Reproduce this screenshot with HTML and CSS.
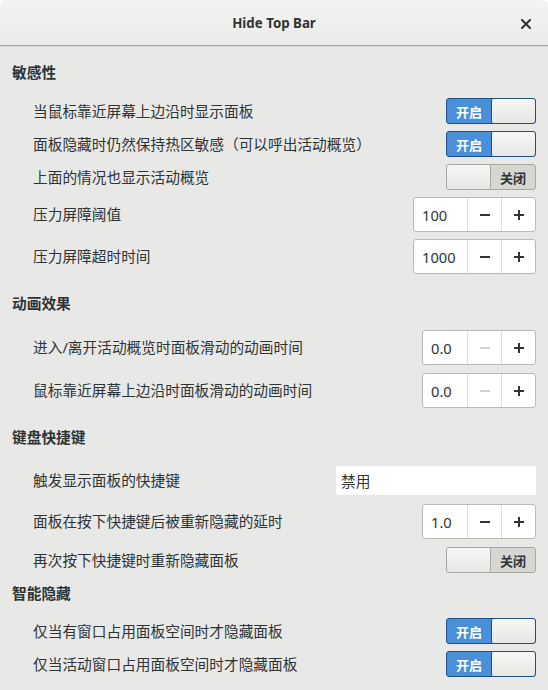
FILE: index.html
```html
<!DOCTYPE html>
<html lang="zh-CN">
<head>
<meta charset="utf-8">
<title>Hide Top Bar</title>
<link rel="stylesheet" href="styles.css">
</head>
<body>
<div class="window">
  <header class="titlebar">
    <span class="title">Hide Top Bar</span>
    <svg class="close" width="10" height="10" viewBox="0 0 10 10"><path d="M1 1L9 9M9 1L1 9" stroke="#2e3436" stroke-width="2" stroke-linecap="square"/></svg>
  </header>
  <main class="content">
    <div class="section h1">敏感性</div>
    <div class="row r1"><span class="label">当鼠标靠近屏幕上边沿时显示面板</span><div class="switch on"><span class="state">开启</span><span class="knob"></span></div></div>
    <div class="row r2"><span class="label">面板隐藏时仍然保持热区敏感（可以呼出活动概览）</span><div class="switch on"><span class="state">开启</span><span class="knob"></span></div></div>
    <div class="row r2"><span class="label">上面的情况也显示活动概览</span><div class="switch off"><span class="knob"></span><span class="state">关闭</span></div></div>
    <div class="row r2"><span class="label">压力屏障阈值</span><div class="spin wide"><span class="value">100</span><span class="btn"><svg width="10" height="10" viewBox="0 0 10 10"><path d="M0 5H10" stroke="currentColor" stroke-width="2"/></svg></span><span class="btn"><svg width="10" height="10" viewBox="0 0 10 10"><path d="M0 5H10M5 0V10" stroke="currentColor" stroke-width="2"/></svg></span></div></div>
    <div class="row r2"><span class="label">压力屏障超时时间</span><div class="spin wide"><span class="value">1000</span><span class="btn"><svg width="10" height="10" viewBox="0 0 10 10"><path d="M0 5H10" stroke="currentColor" stroke-width="2"/></svg></span><span class="btn"><svg width="10" height="10" viewBox="0 0 10 10"><path d="M0 5H10M5 0V10" stroke="currentColor" stroke-width="2"/></svg></span></div></div>

    <div class="section h2">动画效果</div>
    <div class="row r6"><span class="label">进入/离开活动概览时面板滑动的动画时间</span><div class="spin"><span class="value">0.0</span><span class="btn dis"><svg width="10" height="10" viewBox="0 0 10 10"><path d="M0 5H10" stroke="currentColor" stroke-width="2"/></svg></span><span class="btn"><svg width="10" height="10" viewBox="0 0 10 10"><path d="M0 5H10M5 0V10" stroke="currentColor" stroke-width="2"/></svg></span></div></div>
    <div class="row r7"><span class="label">鼠标靠近屏幕上边沿时面板滑动的动画时间</span><div class="spin"><span class="value">0.0</span><span class="btn dis"><svg width="10" height="10" viewBox="0 0 10 10"><path d="M0 5H10" stroke="currentColor" stroke-width="2"/></svg></span><span class="btn"><svg width="10" height="10" viewBox="0 0 10 10"><path d="M0 5H10M5 0V10" stroke="currentColor" stroke-width="2"/></svg></span></div></div>

    <div class="section h2">键盘快捷键</div>
    <div class="row r8"><span class="label">触发显示面板的快捷键</span><div class="entry">禁用</div></div>
    <div class="row r9"><span class="label">面板在按下快捷键后被重新隐藏的延时</span><div class="spin"><span class="value">1.0</span><span class="btn"><svg width="10" height="10" viewBox="0 0 10 10"><path d="M0 5H10" stroke="currentColor" stroke-width="2"/></svg></span><span class="btn"><svg width="10" height="10" viewBox="0 0 10 10"><path d="M0 5H10M5 0V10" stroke="currentColor" stroke-width="2"/></svg></span></div></div>
    <div class="row r7"><span class="label">再次按下快捷键时重新隐藏面板</span><div class="switch off"><span class="knob"></span><span class="state">关闭</span></div></div>

    <div class="section h4">智能隐藏</div>
    <div class="row r11"><span class="label">仅当有窗口占用面板空间时才隐藏面板</span><div class="switch on"><span class="state">开启</span><span class="knob"></span></div></div>
    <div class="row r2"><span class="label">仅当活动窗口占用面板空间时才隐藏面板</span><div class="switch on"><span class="state">开启</span><span class="knob"></span></div></div>
  </main>
</div>
</body>
</html>
```
FILE: styles.css
```css
html, body {
  margin: 0;
  padding: 0;
  background: #ffffff;
}
body {
  font-family: "Noto Sans", "Noto Sans CJK SC", sans-serif;
  color: #2e3436;
  width: 548px;
  height: 690px;
  overflow: hidden;
}
.window {
  width: 548px;
  height: 690px;
  background: #e8e8e7;
  border-radius: 7px 7px 0 0;
  overflow: hidden;
  display: flex;
  flex-direction: column;
}
.titlebar {
  height: 45px;
  flex: none;
  background: linear-gradient(#f3f3f1, #ebebe9);
  border-bottom: 1px solid #a9a9a6;
  box-shadow: 0 1px 0 #d9d9d6;
  display: flex;
  align-items: center;
  justify-content: center;
  position: relative;
}
.title {
  font-family: "Noto Sans", sans-serif;
  font-weight: bold;
  font-size: 13.3px;
  color: #2e3436;
}
.close {
  position: absolute;
  left: 521px;
  top: 19px;
}
.content {
  display: flex;
  flex-direction: column;
  padding: 16px 12px 0 12px;
}
.section {
  height: 20px;
  line-height: 20px;
  font-weight: bold;
  font-size: 14.7px;
}
.h2 { margin-top: 19px; }
.h4 { margin-top: 10px; }
.row {
  display: flex;
  align-items: center;
  justify-content: space-between;
  padding-left: 21px;
  font-size: 14.7px;
}
.label { position: relative; top: -1px; }
.r1 { margin-top: 16px; }
.r2 { margin-top: 7px; }
.r6 { margin-top: 17px; }
.r7 { margin-top: 8px; }
.r8 { margin-top: 19px; }
.r9 { margin-top: 9px; }
.r11 { margin-top: 15px; }

.switch {
  width: 88px;
  height: 24px;
  border-radius: 3px;
  display: flex;
  overflow: hidden;
  flex: none;
}
.switch.on {
  border: 1px solid #1f4f8a;
  background: #4a90d9;
}
.switch.off {
  border: 1px solid #a6a6a2;
  background: #d6d6d3;
}
.switch .state {
  width: 44px;
  display: flex;
  align-items: center;
  justify-content: center;
  font-size: 13px;
  font-weight: bold;
}
.switch.on .state { color: #ffffff; }
.switch.off .state { color: #2e3436; }
.switch .knob {
  flex: 1;
  background: linear-gradient(#f7f7f6, #e6e6e4);
  border-radius: 2px;
}
.switch.on .knob { border-left: 1px solid #1f4f8a; }
.switch.off .knob { border-right: 1px solid #a6a6a2; }

.spin {
  width: 112px;
  height: 33px;
  border: 1px solid #b8b8b4;
  border-radius: 3px;
  background: #ffffff;
  display: flex;
  flex: none;
}
.spin.wide { width: 121px; }
.spin .value {
  flex: 1;
  display: flex;
  align-items: center;
  padding-left: 8px;
  font-size: 14.7px;
}
.spin .btn {
  width: 33px;
  flex: none;
  border-left: 1px solid #dcdcd9;
  display: flex;
  align-items: center;
  justify-content: center;
  color: #2e3436;
}
.spin .btn.dis { color: #d0d0cd; }

.entry {
  width: 195px;
  height: 29px;
  background: #ffffff;
  display: flex;
  align-items: center;
  padding-left: 5px;
  font-size: 14.7px;
  flex: none;
}
```
